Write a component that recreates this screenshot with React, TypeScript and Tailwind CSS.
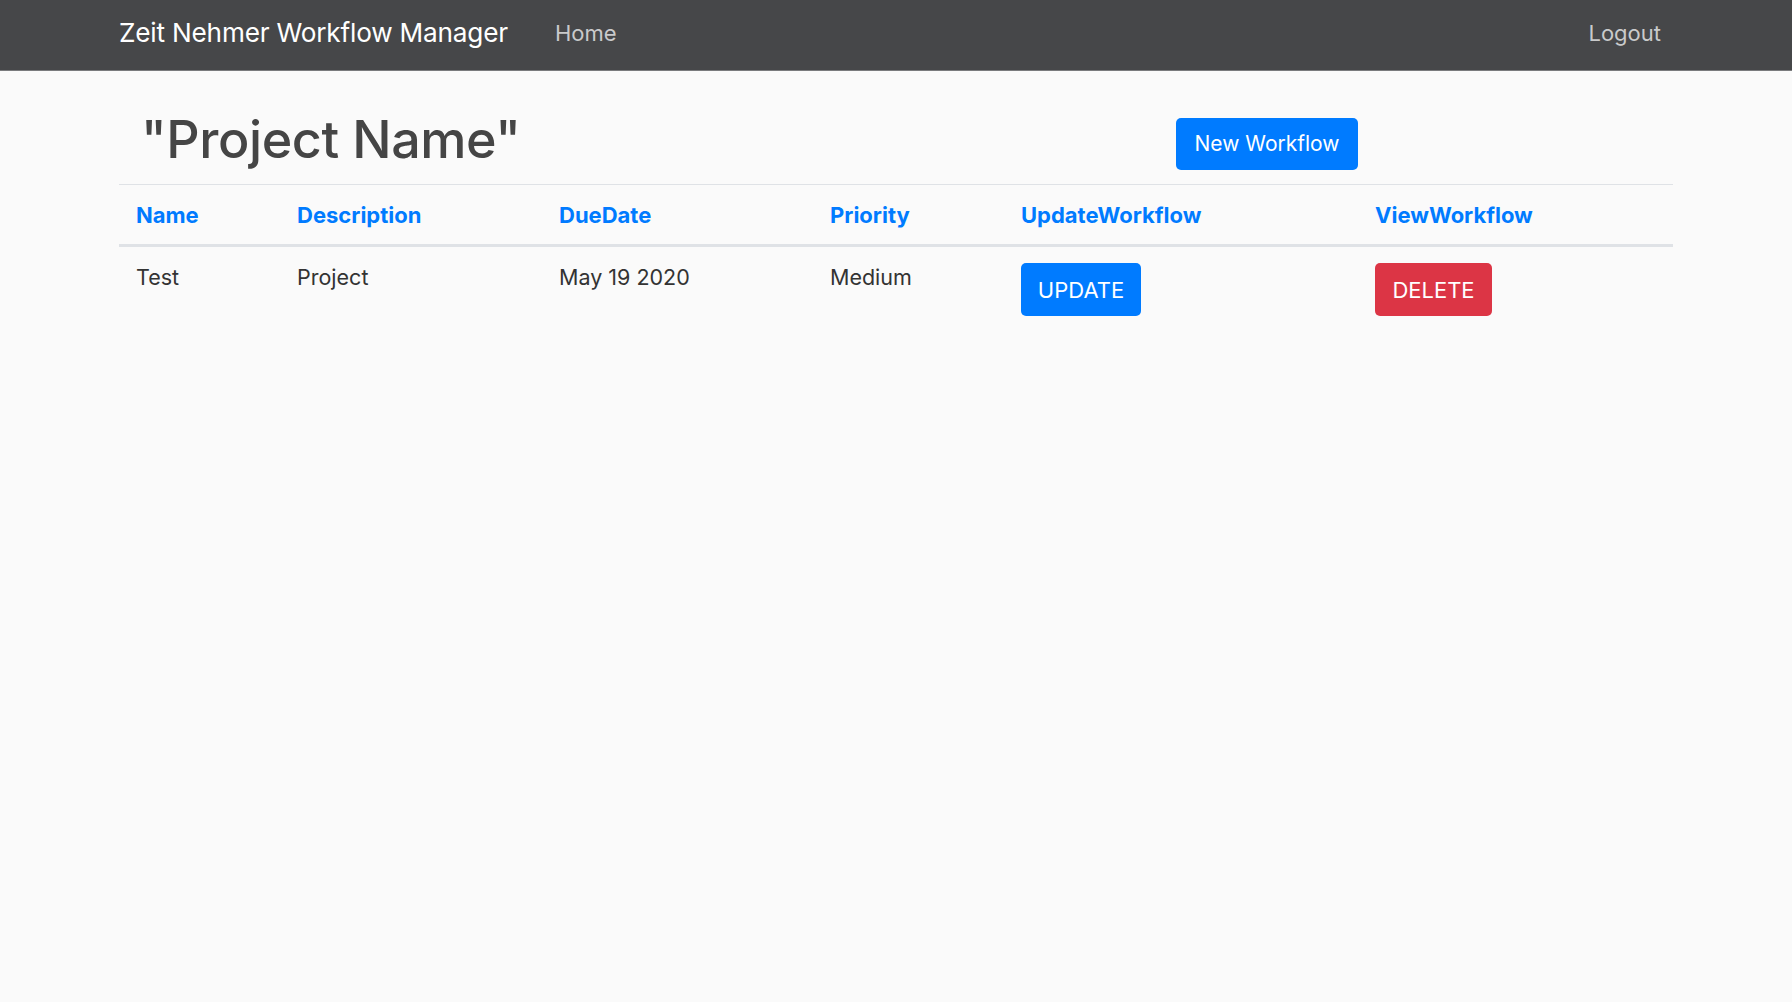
import React from 'react';

const font = { fontFamily: 'Inter, "Noto Sans", sans-serif' };

const columns = ['Name', 'Description', 'DueDate', 'Priority', 'UpdateWorkflow', 'ViewWorkflow'];

const rows = [{ name: 'Test', description: 'Project', dueDate: 'May 19 2020', priority: 'Medium' }];

const Navbar: React.FC = () => {
  return (
    <nav className="h-[71px] bg-[#464749] border-b border-[#7a7b7d]">
      <div className="mx-auto flex h-full w-[1554px] items-center pb-[4px]">
        <div className="text-[26.2px] tracking-[-0.2px] text-white">Zeit Nehmer Workflow Manager</div>
        <a className="ml-[47px] text-[22px] text-[#c9cacb]">Home</a>
        <a className="ml-auto pr-[12px] text-[22px] text-[#c9cacb]">Logout</a>
      </div>
    </nav>
  );
};

export default function App() {
  return (
    <div className="min-h-[1002px] bg-[#fafafa]" style={font}>
      <Navbar />
      <main className="mx-auto w-[1554px]">
        <div className="flex h-[113px] items-start">
          <h1 className="mt-[35px] w-[1057px] pl-[22px] text-[52px] leading-[67px] font-medium tracking-[-0.4px] text-[#454545]">
            "Project Name"
          </h1>
          <button className="mt-[47px] h-[52px] w-[182px] rounded-[5px] bg-[#007bff] text-[21px] text-white">
            New Workflow
          </button>
        </div>

        <div className="grid grid-cols-[161px_262px_271px_191px_354px_315px] border-t border-[#dfe2e6]">
          {columns.map((c) => (
            <div
              key={c}
              className="h-[62px] border-b-[3px] border-[#dfe2e6] px-[17px] pt-[15px] text-[22px] leading-[30px] font-bold text-[#007bff]"
            >
              {c}
            </div>
          ))}
        </div>

        {rows.map((r) => (
          <div key={r.name} className="grid grid-cols-[161px_262px_271px_191px_354px_315px] text-[21.5px] leading-[30px] text-[#333]">
            <div className="px-[17px] pt-[15px]">{r.name}</div>
            <div className="px-[17px] pt-[15px]">{r.description}</div>
            <div className="px-[17px] pt-[15px]">{r.dueDate}</div>
            <div className="px-[17px] pt-[15px]">{r.priority}</div>
            <div className="px-[17px] pt-[16px]">
              <button className="h-[53px] w-[120px] rounded-[5px] bg-[#007bff] text-[22px] text-white">UPDATE</button>
            </div>
            <div className="px-[17px] pt-[16px]">
              <button className="h-[53px] w-[117px] rounded-[5px] bg-[#dc3545] text-[22px] text-white">DELETE</button>
            </div>
          </div>
        ))}
      </main>
    </div>
  );
}
